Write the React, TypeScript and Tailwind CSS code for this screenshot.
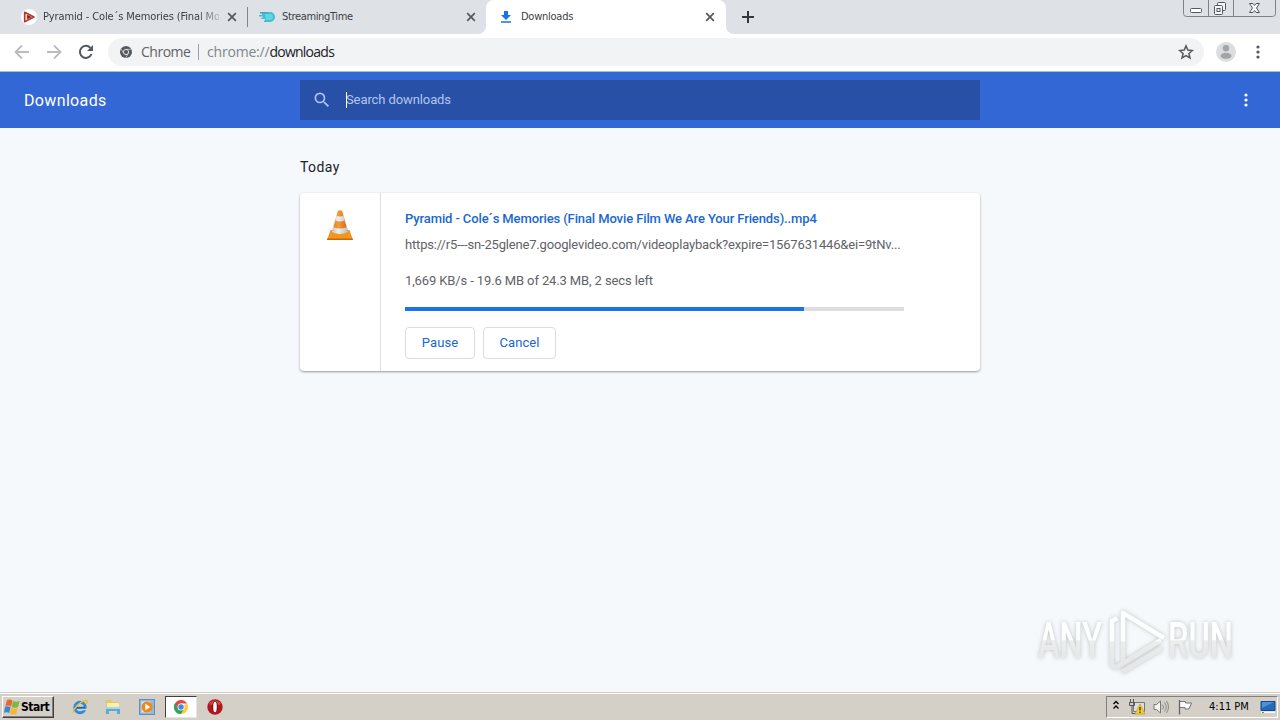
import type { ReactNode } from "react";

const tabFont = "font-['DejaVu_Sans_Condensed','DejaVu_Sans',sans-serif]";

function CloseIcon({ className = "" }: { className?: string }) {
  return (
    <svg className={`w-[10px] h-[10px] shrink-0 ${className}`} viewBox="0 0 10 10" fill="none" stroke="#55585d" strokeWidth="1.7">
      <path d="M1.2 1.2l7.6 7.6M8.8 1.2L1.2 8.8" />
    </svg>
  );
}

function PlayFavicon() {
  return (
    <svg className="w-4 h-4 shrink-0" viewBox="0 0 16 16">
      <circle cx="8" cy="8" r="8" fill="#fff" />
      <path d="M3.6 3.2L13 8l-9.4 4.8z" fill="#e8c9c2" stroke="#b5372b" strokeWidth="1.5" strokeLinejoin="round" />
      <path d="M6.2 5.8L10.6 8l-4.4 2.3z" fill="#8e1d18" />
    </svg>
  );
}

function StreamFavicon() {
  return (
    <svg className="w-4 h-4 shrink-0" viewBox="0 0 16 16">
      <path d="M1 3h10a5 5 0 0 1 0 10H5v-1.600h1V10H2.500V8.600H4V7.400H0V6h3V4.400H1z" fill="#43bdd2" />
      <path d="M6 5h5a3 3 0 0 1 0 6H7z" fill="#5fd6e6" />
      <path d="M1 3h8v1.2H1z" fill="#5a9db5" />
    </svg>
  );
}

function DownloadFavicon() {
  return (
    <svg className="w-4 h-4 shrink-0" viewBox="0 0 16 16" fill="#1a73e8">
      <path d="M6 2h4v4h3L8 11 3 6h3zM3 12.2h10v1.6H3z" />
    </svg>
  );
}

function DotsIcon({ className = "" }: { className?: string }) {
  return (
    <svg className={`w-4 h-4 ${className}`} viewBox="0 0 16 16" fill="currentColor">
      <circle cx="8" cy="3" r="1.6" />
      <circle cx="8" cy="8" r="1.6" />
      <circle cx="8" cy="13" r="1.6" />
    </svg>
  );
}

function TabStrip() {
  return (
    <div className={`h-[34px] bg-[#dee1e6] flex items-start relative text-[11px] text-[#3c4043] ${tabFont}`}>
      <div className="w-[248px] h-[34px] flex items-center pl-[21px]">
        <PlayFavicon />
        <span className="ml-1.5 pt-px w-[176px] shrink-0 overflow-hidden whitespace-nowrap tracking-[-0.13px] [mask-image:linear-gradient(to_right,#000_155px,transparent_182px)]">
          Pyramid - Cole´s Memories (Final Mo
        </span>
        <CloseIcon className="ml-2" />
        <span className="ml-[10px] w-px h-5 bg-[#80868b]" />
      </div>
      <div className="w-[238px] h-[34px] flex items-center pl-[11px] pr-[10px]">
        <StreamFavicon />
        <span className="ml-[7px] pt-px flex-1 tracking-[-0.35px]">StreamingTime</span>
        <CloseIcon />
      </div>
      <div className="w-[240px] h-[34px] bg-white rounded-t-lg flex items-center pl-3 pr-[11px] relative">
        <svg className="absolute -left-2 bottom-0 w-2 h-2" viewBox="0 0 8 8" fill="#fff"><path d="M8 0v8H0a8 8 0 0 0 8-8z" /></svg>
        <svg className="absolute -right-2 bottom-0 w-2 h-2" viewBox="0 0 8 8" fill="#fff"><path d="M0 0v8h8a8 8 0 0 1-8-8z" /></svg>
        <DownloadFavicon />
        <span className="ml-[7px] pt-px flex-1 tracking-[-0.25px]">Downloads</span>
        <CloseIcon />
      </div>
      <svg className="w-3 h-3 mt-[11px] ml-4" viewBox="0 0 12 12" stroke="#34373b" strokeWidth="2"><path d="M6 0v12M0 6h12" /></svg>
      <WindowButtons />
    </div>
  );
}

function WindowButtons() {
  return (
    <svg className="absolute right-[3px] top-0 w-[94px] h-[18px]" viewBox="0 0 94 18" fill="none" stroke="#7e848c">
      <path d="M.5 0v13.5a3 3 0 0 0 3 3h86a3 3 0 0 0 3-3V0M25.5 0v16.5M50.5 0v16.5" />
      <rect x="7.500" y="8.500" width="11" height="4" rx="1" fill="#fff" stroke="#54585f" />
      <g stroke="#54585f" fill="#f5f6f8">
        <rect x="34.500" y="2.500" width="8" height="8" rx="1" />
        <rect x="31.500" y="5.500" width="8" height="9" rx="1" />
        <rect x="34" y="8.500" width="3" height="3" />
      </g>
      <path d="M66.500 3.500h3.500l1.500 2 1.500-2h3.500l-3 4.500 3 4.500H73l-1.500-2-1.500 2h-3.500l3-4.500z" fill="#f8f8f8" stroke="#54585f" />
    </svg>
  );
}

function Toolbar() {
  return (
    <div className="h-[38px] bg-white border-b border-[#a5bfdb] flex items-center pb-px pl-3.5 pr-3.5 font-['Open_Sans','Noto_Sans',sans-serif]">
      <svg className="w-4 h-4" viewBox="0 0 16 16" fill="none" stroke="#babcbe" strokeWidth="1.8"><path d="M15 8H2M8 1.500L1.500 8 8 14.500" /></svg>
      <svg className="w-4 h-4 ml-4" viewBox="0 0 16 16" fill="none" stroke="#babcbe" strokeWidth="1.800"><path d="M1 8h13M8 1.500L14.500 8 8 14.500" /></svg>
      <svg className="w-4 h-4 ml-4" viewBox="0 0 16 16" fill="none" stroke="#55585d" strokeWidth="2">
        <path d="M13.500 10A6 6 0 1 1 12.400 3.900" />
        <path d="M15 1v6H9z" fill="#55585d" stroke="none" />
      </svg>
      <div className="ml-3.5 w-[1096px] h-7 rounded-full bg-[#f1f3f4] flex items-center pl-3 pr-[10px] text-[14px]">
        <svg className="w-3 h-3" viewBox="0 0 12 12">
          <circle cx="6" cy="6" r="6" fill="#55585d" />
          <circle cx="6" cy="6" r="2.600" fill="#55585d" stroke="#f1f3f4" strokeWidth=".9" />
          <path d="M6 3.300h5.400M3.700 7.300L1 2.800M8.300 7.300L5.700 12" stroke="#d6d8da" strokeWidth=".7" />
        </svg>
        <span className="ml-[9px] pb-0.5 w-[49px] text-[#5f6368] tracking-[-0.5px]">Chrome</span>
        <span className="w-px h-4 bg-[#9aa0a6] mx-2" />
        <span className="pb-0.5 text-[#80868b] tracking-[-0.2px]">chrome://<span className="text-[#202124] tracking-[-0.75px]">downloads</span></span>
        <svg className="w-4 h-4 ml-auto" viewBox="0 0 16 16" fill="none" stroke="#55585d" strokeWidth="1.500">
          <path d="M8 1.900l1.800 4.200 4.600.4-3.500 3 1.100 4.500L8 11.600 4 14l1.100-4.500-3.500-3 4.600-.4z" />
        </svg>
      </div>
      <svg className="w-5 h-5 ml-3" viewBox="0 0 20 20">
        <circle cx="10" cy="10" r="10" fill="#dcdddf" />
        <circle cx="10" cy="6.300" r="3.200" fill="#a2a4a7" />
        <ellipse cx="10" cy="13.800" rx="5.500" ry="3" fill="#a2a4a7" />
      </svg>
      <DotsIcon className="ml-auto text-[#55585d]" />
    </div>
  );
}

function Header() {
  return (
    <header className="h-14 bg-[#3367d6] flex items-center text-white">
      <h1 className="w-[300px] pl-6 pt-0.5 text-[16px] tracking-[0.35px]">Downloads</h1>
      <div className="w-[680px] h-10 bg-[#2850a7] flex items-center pl-3 text-[13px] text-[#b3c6ee]">
        <svg className="w-5 h-5" viewBox="0 0 24 24" fill="#a9c3f7">
          <path d="M15.500 14h-.79l-.28-.27A6.470 6.470 0 0 0 16 9.500 6.500 6.500 0 1 0 9.500 16c1.610 0 3.090-.59 4.230-1.570l.27.28v.79l5 4.990L20.490 19l-4.990-5zm-6 0C7.010 14 5 11.990 5 9.500S7.010 5 9.500 5 14 7.010 14 9.500 11.990 14 9.500 14z" />
        </svg>
        <span className="ml-3.5 -mr-px w-px h-4 bg-white" />
        <span className="tracking-[-0.1px]">Search downloads</span>
      </div>
      <DotsIcon className="ml-auto mr-[26px]" />
    </header>
  );
}

function VlcCone() {
  return (
    <svg className="w-8 h-8" viewBox="0 0 32 32">
      <defs>
        <linearGradient id="cone" x1="0" x2="1">
          <stop offset="0" stopColor="#e87d18" />
          <stop offset=".4" stopColor="#f59a3a" />
          <stop offset="1" stopColor="#d06408" />
        </linearGradient>
        <linearGradient id="band" x1="0" x2="1">
          <stop offset="0" stopColor="#c4c4c4" />
          <stop offset=".4" stopColor="#eeeeee" />
          <stop offset="1" stopColor="#b9b9b9" />
        </linearGradient>
      </defs>
      <path d="M6.500 21h19L29 31H3z" fill="#f4961e" />
      <path d="M3.200 29.500h25.600V31H3z" fill="#c9660b" />
      <path d="M13.800 2q2.200-1.600 4.400 0l5.800 21q-8 4-16 0z" fill="url(#cone)" />
      <path d="M12.500 6.800q3.500 1.500 7 0l1.400 4.600q-4.900 2-9.800 0zM9.300 18q6.700 3 13.400 0l1.500 5q-8.200 4-16.400 0z" fill="url(#band)" />
    </svg>
  );
}

function DownloadButton({ children, className }: { children: ReactNode; className: string }) {
  return (
    <button className={`h-8 rounded border border-[#dadce0] text-[13px] text-[#1967d2] tracking-[0.1px] ${className}`}>{children}</button>
  );
}

function DownloadItem() {
  return (
    <div className="w-[680px] h-[178px] bg-white rounded flex shadow-[0_1px_2px_rgba(60,64,67,0.4),0_1px_3px_rgba(60,64,67,0.15)]">
      <div className="w-[81px] border-r border-[#dddee0] flex justify-center pt-4">
        <VlcCone />
      </div>
      <div className="pl-6 pt-[17px] w-[523px] text-[13px] text-[#5f6368]">
        <div className="h-[18px] leading-[18px] font-medium text-[#1967d2] whitespace-nowrap tracking-[-0.11px]">
          Pyramid - Cole´s Memories (Final Movie Film We Are Your Friends)..mp4
        </div>
        <div className="mt-2 h-[18px] leading-[18px] whitespace-nowrap tracking-[-0.17px]">
          https://r5---sn-25glene7.googlevideo.com/videoplayback?expire=1567631446&amp;ei=9tNv...
        </div>
        <div className="mt-[18px] h-[18px] leading-[18px] whitespace-nowrap tracking-[-0.12px]">1,669 KB/s - 19.6 MB of 24.3 MB, 2 secs left</div>
        <div className="mt-[17px] h-1 bg-[#dedede]">
          <div className="h-1 w-[80%] bg-[#1a73e8]" />
        </div>
        <div className="mt-4 flex gap-2">
          <DownloadButton className="w-[70px]">Pause</DownloadButton>
          <DownloadButton className="w-[73px]">Cancel</DownloadButton>
        </div>
      </div>
    </div>
  );
}

function Watermark() {
  return (
    <svg className="absolute left-[1030px] top-[604px] w-[212px] h-[76px] drop-shadow-[0_0_2px_rgba(0,0,0,0.22)]" viewBox="0 0 212 76">
      <defs>
        <linearGradient id="mark" x1="0" y1="16" x2="0" y2="58" gradientUnits="userSpaceOnUse">
          <stop offset=".5" stopColor="#fdfefe" />
          <stop offset=".52" stopColor="#eceded" />
          <stop offset="1" stopColor="#e6e7e8" />
        </linearGradient>
        <linearGradient id="letters" x1="0" y1="-36" x2="0" y2="0" gradientUnits="userSpaceOnUse">
          <stop offset=".5" stopColor="#fdfefe" />
          <stop offset=".52" stopColor="#eceded" />
          <stop offset="1" stopColor="#e6e7e8" />
        </linearGradient>
      </defs>
      <g fill="url(#letters)" fontFamily="Roboto, sans-serif" fontSize="50" fontWeight="500">
        <text transform="translate(8 54)" textLength="64" lengthAdjust="spacingAndGlyphs">ANY</text>
        <text transform="translate(138 54)" textLength="65" lengthAdjust="spacingAndGlyphs">RUN</text>
      </g>
      <g fill="none" stroke="url(#mark)" strokeWidth="4.500" strokeLinejoin="round">
        <path d="M87 14l-5 3v44l5 3" />
        <path d="M134 34L93 9v50" />
        <path d="M87 63l44-27" />
        <path d="M92 68l40-24" />
      </g>
    </svg>
  );
}

function Taskbar() {
  return (
    <footer className="h-[27px] bg-[#d4d0c8] border-t border-white flex items-start pt-0.5 shadow-[0_-1px_0_#d4d0c8] font-['DejaVu_Sans_Condensed','DejaVu_Sans',sans-serif] text-[11px] text-black">
      <div className="ml-0.5 h-[22px] w-[52px] border border-t-white border-l-white border-r-[#404040] border-b-[#404040] shadow-[inset_-1px_-1px_0_#808080] flex items-center pl-px font-bold text-[12px] tracking-[-0.5px]">
        <svg className="w-4 h-4 mr-px shrink-0" viewBox="0 0 16 16">
          <path d="M3 1q3-1 5.500.5L7 7.500Q4.500 6 1.300 7z" fill="#e8682c" />
          <path d="M9 2q3 1.300 6.700 0l-1.700 6Q11 9.300 7.600 7.900z" fill="#7fb53c" />
          <path d="M1 7.700q2.800-1 5.600.5L5.200 14Q2.800 12.600 0 13.800z" fill="#3f86d1" />
          <path d="M7.400 8.700q2.800 1.400 6.300.2L12.200 15q-3 1.300-6.400-.3z" fill="#f4b92e" />
        </svg>
        Start
      </div>
      <svg className="ml-[18px] mt-[3px] w-4 h-4" viewBox="0 0 16 16" fill="none">
        <circle cx="8" cy="8.500" r="5.200" stroke="#2f8bd8" strokeWidth="3" />
        <path d="M4 8.800h9" stroke="#1768b3" strokeWidth="2" />
        <path d="M10 10.500h5" stroke="#d4d0c8" strokeWidth="1.500" />
        <path d="M1 14C1 10 10 0 15 2q1 1-1 3" stroke="#efbd38" strokeWidth="1.400" />
      </svg>
      <svg className="ml-[17px] mt-[3px] w-4 h-4" viewBox="0 0 16 16">
        <path d="M1 1h5l1 2h7v6H1z" fill="#e6c765" />
        <path d="M2 4h12v6H2z" fill="#faf0a8" />
        <path d="M1 8h14v7h-3v-3H4v3H1z" fill="#5da9d0" />
        <path d="M1 8h14v2H1z" fill="#a4d9ec" />
      </svg>
      <svg className="ml-[18px] mt-[3px] w-4 h-4" viewBox="0 0 16 16">
        <rect x=".5" y=".5" width="15" height="15" fill="#8fb9df" stroke="#5b8fc5" />
        <rect x="2.500" y="2.500" width="9" height="11" fill="#d9ebf8" />
        <circle cx="8" cy="8" r="5.500" fill="#f18715" />
        <path d="M6.300 4.800l5 3.200-5 3.200z" fill="#fff" />
      </svg>
      <div className="ml-[10px] h-[22px] w-8 bg-white border border-t-[#404040] border-l-[#404040] border-r-[#e8e6e0] border-b-[#e8e6e0] flex items-center justify-center">
        <svg className="w-[14px] h-[14px]" viewBox="0 0 16 16">
          <path d="M8 8V16A8 8 0 0 1 1.070 4z" fill="#36a055" />
          <path d="M8 8L14.930 4A8 8 0 0 1 8 16z" fill="#fbcd3e" />
          <path d="M8 4h6.930A8 8 0 0 0 1.070 4l3.460 6z" fill="#df4a3d" />
          <path d="M1.070 4A8 8 0 0 0 8 16l3.460-6H4.530z" fill="#36a055" />
          <circle cx="8" cy="8" r="4" fill="#fff" />
          <circle cx="8" cy="8" r="3.100" fill="#4584ed" />
        </svg>
      </div>
      <svg className="ml-[10px] mt-[3px] w-4 h-4" viewBox="0 0 16 16">
        <circle cx="8" cy="8" r="7.700" fill="#b3171d" />
        <path d="M2 5a7 7 0 0 1 12 0q-6 3-12 0z" fill="#cf4a4a" />
        <ellipse cx="8" cy="8" rx="3" ry="6" fill="#8a0f14" />
        <ellipse cx="8" cy="8" rx="1.800" ry="5.300" fill="#fff" />
      </svg>
      <div className="ml-auto mr-0.5 h-[22px] w-[172px] border border-t-[#808080] border-l-[#808080] border-r-white border-b-white flex items-center">
        <svg className="ml-[5px] w-2 h-[10px] mb-1" viewBox="0 0 8 10" fill="none" stroke="#000" strokeWidth="1.400"><path d="M1.500 4L4 1.500 6.500 4M1.500 8.500L4 6l2.500 2.500" /></svg>
        <svg className="ml-[9px] w-4 h-4" viewBox="0 0 16 16">
          <path d="M4.500 3.500h11v9h-11z" fill="#ddd" stroke="#777" />
          <path d="M1.500 0v3M4.500 0v3M.5 3.500h5v3h-5zM3 6v8.500h4" fill="none" stroke="#555" />
          <path d="M11 5l5 10H6z" fill="#f7d22c" stroke="#b58d0b" strokeWidth=".6" />
          <path d="M11 8v3.500M11 12.500V14" stroke="#222" strokeWidth="1.200" />
        </svg>
        <svg className="ml-2 w-4 h-4" viewBox="0 0 16 16" fill="none" stroke="#777">
          <path d="M1 5.500h2.500L7.500 2v12l-4-3.500H1z" fill="#f4f4f4" />
          <path d="M9.500 5.500q2 2.500 0 5M11.500 3.500q3.500 4.500 0 9M13.500 2q4 6 0 12" strokeWidth=".8" />
        </svg>
        <svg className="ml-2 w-4 h-4" viewBox="0 0 16 16" fill="#fafafa" stroke="#777">
          <path d="M2.500 2.500h6v1.500h6L12 10H8V8.500H2.500z" />
          <path d="M2.500 1v14.500" stroke="#666" strokeWidth="1.300" />
        </svg>
        <span className="ml-4 pt-px w-[42px] whitespace-nowrap">4:11 PM</span>
        <svg className="ml-[9px] w-4 h-4" viewBox="0 0 16 16">
          <path d="M1 2.500h14v9H1z" fill="#2469ba" stroke="#164885" />
          <path d="M2 3h12L2 9z" fill="#4a92dc" />
          <path d="M1 12.500h14v1.500H1z" fill="#f5f8fb" />
          <path d="M2 13h2v1H2z" fill="#3fa94d" />
        </svg>
      </div>
    </footer>
  );
}

export default function App() {
  return (
    <div className="w-[1280px] h-[720px] overflow-hidden relative flex flex-col bg-[#f5f9fc] font-[Roboto,sans-serif]">
      <TabStrip />
      <Toolbar />
      <Header />
      <main className="flex-1 pl-[300px] pt-[29px]">
        <h2 className="h-5 leading-5 mb-4 text-[14px] text-[#202124] tracking-[0.4px]">Today</h2>
        <DownloadItem />
      </main>
      <Watermark />
      <Taskbar />
    </div>
  );
}
